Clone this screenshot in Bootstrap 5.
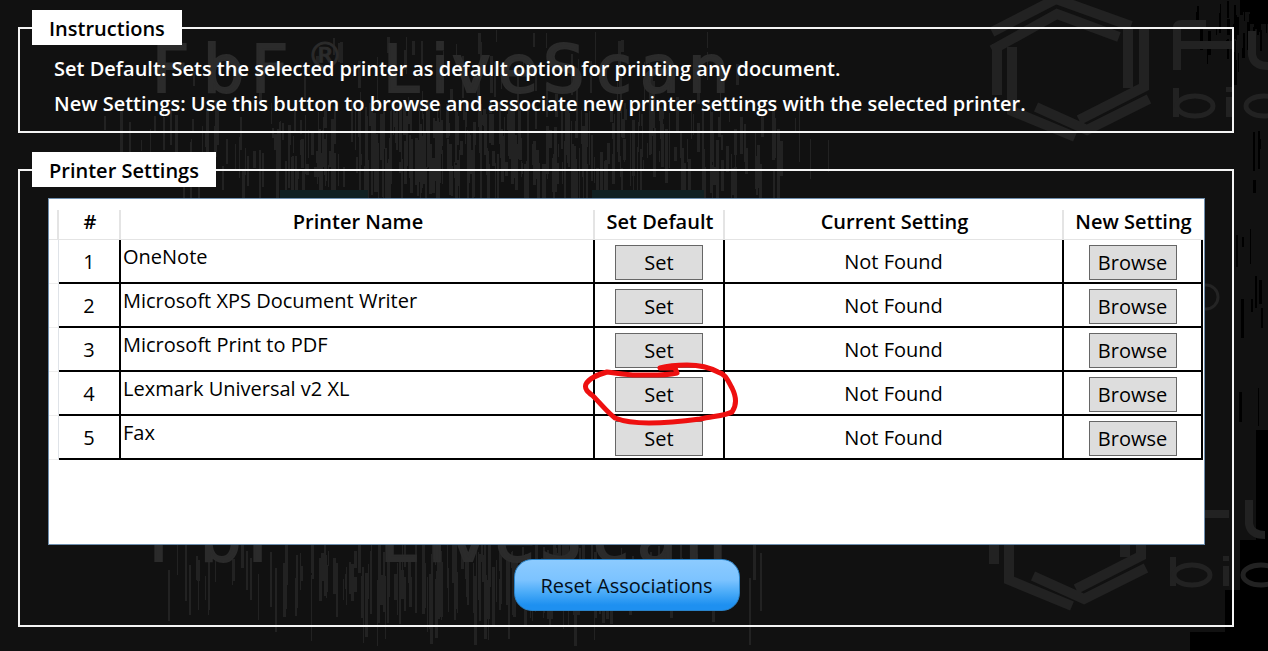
<!DOCTYPE html>
<html lang="en">
<head>
<meta charset="utf-8">
<meta name="viewport" content="width=device-width, initial-scale=1">
<title>Printer Settings</title>
<link href="https://cdn.jsdelivr.net/npm/bootstrap@5.3.0/dist/css/bootstrap.min.css" rel="stylesheet">
<style>
  body { background: #111; color: #000; font-family: "Open Sans", "Noto Sans", sans-serif; font-size: 20px; line-height: 26px; }
  .backdrop { z-index: -1; }
  .page { padding: 10px 34px 20px 18px; }
  .group { border: 2px solid #f4f4f4; padding: 0 27px 0 28px; }
  .group + .group { margin-top: 19px; }
  .group legend { margin: 0 0 0 -16px; padding: 2px 17px 0; background: #fff; font-size: 20px; line-height: 33px; font-weight: 650; }
  .help { color: #fff; font-weight: 650; line-height: 35px; padding: 6px 6px 10px; }
  .grid-panel { background: #fff; border: 1px solid #6f8fae; min-height: 347px; margin-top: 11px; padding-right: 1px; }
  .printers { table-layout: fixed; border-collapse: separate; border-spacing: 0; }
  .printers th { height: 41px; padding: 5px 0 0; text-align: center; border-bottom: 1px solid #e4e4e4; white-space: nowrap; line-height: 34px; font-weight: 650;
    background: linear-gradient(#e4e4e4, #e4e4e4) right bottom / 2px 29px no-repeat; }
  .printers th:last-child { background: none; }
  .printers td { height: 44px; padding: 2px 0 0; text-align: center; vertical-align: middle; border-right: 2px solid #000; border-bottom: 2px solid #000; }
  .printers td.gutter { border-right: 1px solid #dfe3e8; border-bottom: 1px solid #eee; }
  .printers td.name { text-align: left; vertical-align: top; padding: 4px 2px 0; }
  .c-gutter { width: 10px; } .c-num { width: 62px; } .c-set { width: 130px; } .c-cur { width: 339px; } .c-new { width: 139px; }
  .cell-btn { width: 88px; height: 35px; padding: 1px 0 0; border: 1px solid #666; border-radius: 0; background: #ddd; color: #000; font-size: 20px; line-height: 30px; vertical-align: middle; }
  .cell-btn:hover { background: #cfe6f7; color: #000; border-color: #3c7fb1; }
  .ring { width: 160px; height: 70px; pointer-events: none; z-index: 2; }
  .reset { width: 226px; height: 52px; margin: 14px 0; padding: 2px 0 0; border: 1px solid #2a83c9; border-radius: 18px; color: #04101c; font-size: 20px;
    background: linear-gradient(#8ccbff 0, #7cc3ff 40%, #4aabf8 65%, #1e90f0 90%, #1e90f0 100%); }
  .reset:hover { color: #000; background: #5fb6fb; }
</style>
</head>
<body>
<svg class="backdrop position-absolute top-0 start-0 w-100 h-100" viewBox="0 0 1268 651" preserveAspectRatio="xMinYMin slice" aria-hidden="true">
  <g id="shade" fill="#000"></g>
  <g id="streaks" fill="#222"></g>
  <g fill="#102022"><rect x="280" y="190" width="88" height="8"/><rect x="592" y="190" width="112" height="8"/></g>
  <defs>
    <g id="mark" fill="#242424">
      <g fill="#2b2b2b" stroke="#2b2b2b" stroke-width="2" font-family="DejaVu Sans, sans-serif">
        <text x="152" y="92" font-size="65">F</text><text x="203" y="92" font-size="65">b</text><text x="251" y="92" font-size="65">F</text>
        <text x="307" y="68" font-size="36" stroke-width="1">®</text>
        <text x="383" y="92" font-size="65">L</text><text x="431" y="92" font-size="65">i</text><text x="452" y="92" font-size="65">v</text><text x="498" y="92" font-size="65">e</text>
        <text x="543" y="92" font-size="65">S</text><text x="596" y="92" font-size="65">c</text><text x="640" y="92" font-size="65">a</text><text x="688" y="92" font-size="65">n</text>
      </g>
      <g fill="none" stroke="#222" stroke-width="10">
        <path d="M992 32L1056 -1L1131 26M992 50L1057 14L1119 37M997 44V95M1012 47V111L1075 137M1036 107L1087 130L1149 99M1079 120L1144 87V28M1128 28V88"/>
        <path stroke-width="8" d="M1177 70V28Q1177 24 1182 24H1206M1180 45H1232M1252 31V55Q1254 66 1268 66"/>
        <path stroke-width="6" d="M1176 88V117M1229 97V117M1229 87V92"/>
        <ellipse cx="1195" cy="106" rx="18" ry="10" stroke-width="5"/><ellipse cx="1264" cy="106" rx="18" ry="10" stroke-width="5"/>
      </g>
    </g>
  </defs>
  <use href="#mark"/>
  <use href="#mark" x="-3" y="469"/>
  <circle cx="1206" cy="297" r="12" fill="none" stroke="#242424" stroke-width="3"/>
</svg>

<main class="page position-relative">
  <fieldset class="group">
    <legend class="float-none w-auto">Instructions</legend>
    <div class="help">
      <div>Set Default: Sets the selected printer as default option for printing any document.</div>
      <div>New Settings: Use this button to browse and associate new printer settings with the selected printer.</div>
    </div>
  </fieldset>

  <fieldset class="group">
    <legend class="float-none w-auto">Printer Settings</legend>
    <div class="grid-panel">
      <table class="printers w-100">
        <colgroup><col class="c-gutter"><col class="c-num"><col><col class="c-set"><col class="c-cur"><col class="c-new"></colgroup>
        <thead><tr><th></th><th scope="col">#</th><th scope="col">Printer Name</th><th scope="col">Set Default</th><th scope="col">Current Setting</th><th scope="col">New Setting</th></tr></thead>
        <tbody>
          <tr><td class="gutter"></td><td>1</td><td class="name">OneNote</td><td><button type="button" class="btn cell-btn">Set</button></td><td>Not Found</td><td><button type="button" class="btn cell-btn">Browse</button></td></tr>
          <tr><td class="gutter"></td><td>2</td><td class="name">Microsoft XPS Document Writer</td><td><button type="button" class="btn cell-btn">Set</button></td><td>Not Found</td><td><button type="button" class="btn cell-btn">Browse</button></td></tr>
          <tr><td class="gutter"></td><td>3</td><td class="name">Microsoft Print to PDF</td><td><button type="button" class="btn cell-btn">Set</button></td><td>Not Found</td><td><button type="button" class="btn cell-btn">Browse</button></td></tr>
          <tr><td class="gutter"></td><td>4</td><td class="name">Lexmark Universal v2 XL</td><td class="position-relative"><button type="button" class="btn cell-btn">Set</button>
            <svg class="ring position-absolute top-50 start-50 translate-middle" viewBox="0 0 160 70" fill="none" stroke="#ee1010" stroke-width="5" stroke-linecap="round" stroke-linejoin="round" aria-hidden="true"><path d="M98 15C84 18 70 17 58 17C46 17 38 15 28 14C18 17 10 20 7 26C5 31 9 34 14 38C22 46 28 54 36 60C46 64 58 65 70 65C90 65 106 63 121 61C134 58 146 58 153 54C158 47 157 38 153 30C149 23 147 16 139 14C130 9 120 7 108 7C98 7 88 8 81 10H96Z"/></svg></td><td>Not Found</td><td><button type="button" class="btn cell-btn">Browse</button></td></tr>
          <tr><td class="gutter"></td><td>5</td><td class="name">Fax</td><td><button type="button" class="btn cell-btn">Set</button></td><td>Not Found</td><td><button type="button" class="btn cell-btn">Browse</button></td></tr>
        </tbody>
      </table>
    </div>
    <div class="text-center"><button type="button" class="btn reset">Reset Associations</button></div>
  </fieldset>
</main>

<script src="https://cdn.jsdelivr.net/npm/bootstrap@5.3.0/dist/js/bootstrap.bundle.min.js"></script>
<script>
  // Faint vertical grain of the backdrop, from a fixed seed so it never changes between loads.
  let seed = 7;
  const rnd = () => (seed = (seed * 16807) % 2147483647) / 2147483647;
  function grain(id, n, x0, x1, y0, y1, minH, maxH) {
    let s = '';
    for (let i = 0; i < n; i++) {
      const u = (rnd() + rnd()) / 2, w = 1 + Math.floor(rnd() * 3), h = Math.floor(minH + rnd() * (maxH - minH));
      s += `<rect x="${Math.round(x0 + u * (x1 - x0))}" y="${Math.round(y0 + rnd() * (y1 - y0))}" width="${w}" height="${h}"/>`;
    }
    document.getElementById(id).insertAdjacentHTML('beforeend', s);
  }
  grain('streaks', 420, 100, 830, 100, 170, 10, 60);
  grain('streaks', 60, 150, 800, 30, 100, 8, 50);
  grain('streaks', 240, 140, 780, 540, 580, 15, 70);
  grain('shade', 40, 1180, 1290, 0, 60, 6, 30);
  grain('shade', 30, 1225, 1300, 130, 560, 10, 40);
  document.getElementById('shade').insertAdjacentHTML('beforeend', '<path d="M1190 651V632H1225V590H1240V540H1256V430H1268V651ZM1240 0H1268V24H1250V12H1240Z"/>');
</script>
</body>
</html>
